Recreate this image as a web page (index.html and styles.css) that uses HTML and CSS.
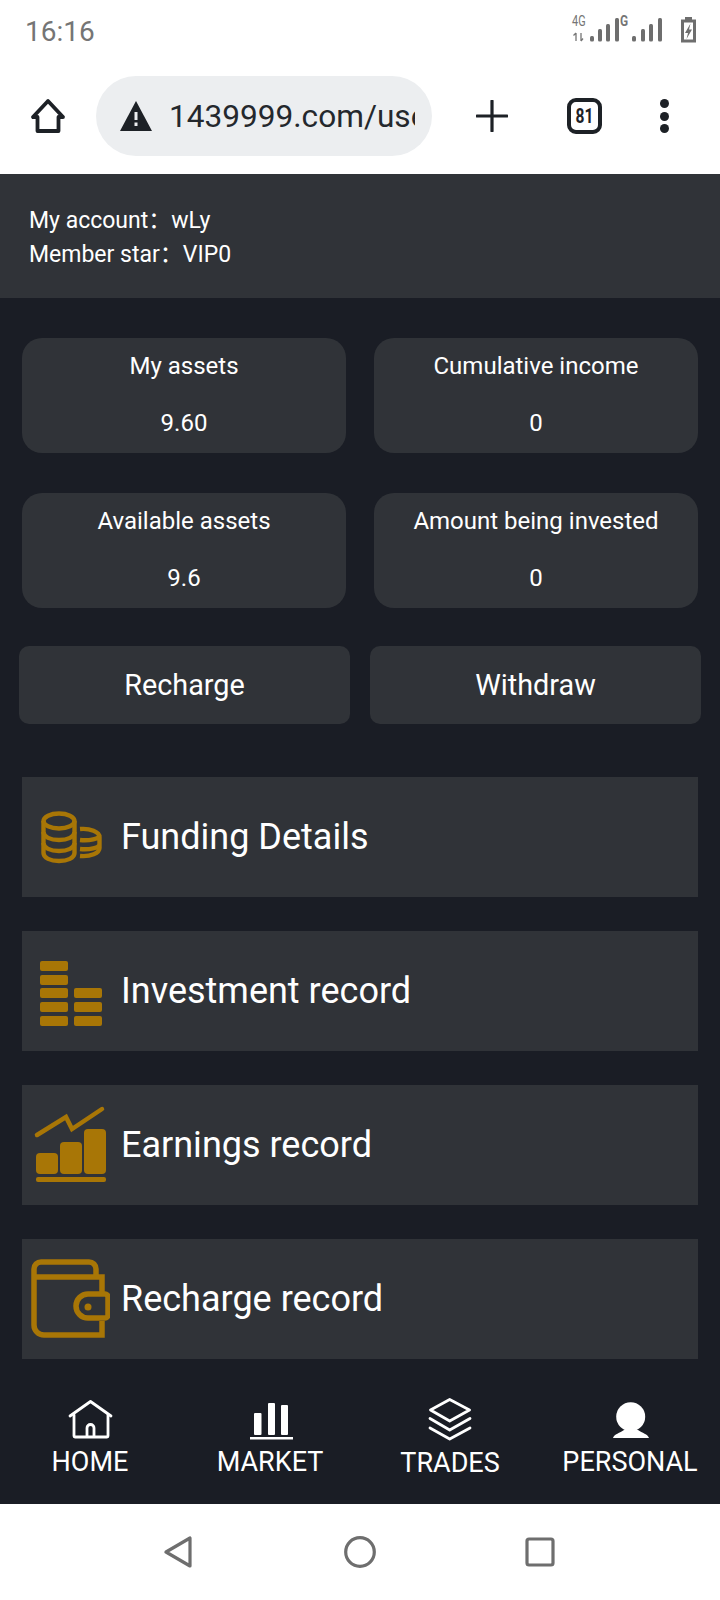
FILE: index.html
```
<!DOCTYPE html>
<html>

<head>
  <title>Personal</title>
  <meta charset="UTF-8">
  <link rel="stylesheet" href="styles.css">
</head>

<body>
  <div class="status-bar">
    <span class="clock">16:16</span>
    <svg class="status-icons" width="130" height="30" viewBox="0 0 130 30">
      <text class="net-label" transform="translate(4,11) scale(0.78,1)">4G</text>
      <path d="M8 18v8M5.500 20.500L8 18M13 18v8M13 26l2-2.500" stroke="#757575" stroke-width="1.300" fill="none" />
      <g fill="#6e6e6e">
        <rect x="22" y="21" width="4" height="5.500" rx="1.500" />
        <rect x="30" y="14" width="4" height="12.500" rx="1.500" />
        <rect x="38" y="9" width="4" height="17.500" rx="1.500" />
        <rect x="47" y="3" width="4" height="23.500" rx="1.500" />
        <rect x="64" y="21" width="4" height="5.500" rx="1.500" />
        <rect x="73" y="14" width="4" height="12.500" rx="1.500" />
        <rect x="81" y="9" width="4" height="17.500" rx="1.500" />
        <rect x="90" y="3" width="4" height="23.500" rx="1.500" />
      </g>
      <text class="net-label bold" transform="translate(52,11) scale(0.85,1)">G</text>
      <rect x="114.500" y="6" width="12" height="20" fill="none" stroke="#6e6e6e" stroke-width="3" />
      <rect x="117" y="2" width="7" height="4" fill="#6e6e6e" />
      <path d="M122.500 8.500l-5.500 9.500h3l-1.500 6 5.500-9.500h-3z" fill="#6e6e6e" />
    </svg>
  </div>

  <div class="toolbar">
    <svg class="tool-home" width="36" height="36" viewBox="0 0 36 36">
      <path d="M18 3L3 19h4.500v14h21V19H33z" fill="none" stroke="#1d2126" stroke-width="3.800" stroke-linejoin="round" />
    </svg>
    <div class="url-pill">
      <svg width="32" height="30" viewBox="0 0 32 30">
        <path d="M16 0L32 30H0z" fill="#1d2126" />
        <rect x="14.500" y="11" width="3" height="8" fill="#eceef0" />
        <rect x="14.500" y="21.500" width="3" height="3.500" fill="#eceef0" />
      </svg>
      <span class="url-text">1439999.com/user/index</span>
    </div>
    <svg class="tool-plus" width="32" height="32" viewBox="0 0 32 32">
      <path d="M16 1v30M1 16h30" stroke="#1d2126" stroke-width="3.200" stroke-linecap="round" />
    </svg>
    <div class="tab-count"><span>81</span></div>
    <div class="tool-menu"><i></i><i></i><i></i></div>
  </div>

  <div class="page">
    <div class="account">
      <div>My account：wLy</div>
      <div>Member star：VIP0</div>
    </div>

    <div class="stats">
      <div class="stat">
        <div>My assets</div>
        <div>9.60</div>
      </div>
      <div class="stat">
        <div>Cumulative income</div>
        <div>0</div>
      </div>
      <div class="stat">
        <div>Available assets</div>
        <div>9.6</div>
      </div>
      <div class="stat">
        <div>Amount being invested</div>
        <div>0</div>
      </div>
    </div>

    <div class="actions">
      <div class="action">Recharge</div>
      <div class="action">Withdraw</div>
    </div>

    <div class="records">
      <div class="record">
        <svg width="80" height="80" viewBox="0 0 80 80" fill="none" stroke="#a87606" stroke-width="4.400">
          <ellipse cx="29" cy="24" rx="15.500" ry="7.500" />
          <path d="M13.500 24v32c0 5 7 8 15.500 8s15.500-3 15.500-8V24" />
          <path d="M13.500 35c0 5 7 8 15.500 8s15.500-3 15.500-8M13.500 46c0 5 7 8 15.500 8s15.500-3 15.500-8" />
          <path d="M50 32c10-1 19.500 3 19.500 8v11c0 5-9 9-19.500 8M50 43c9 1 19.500-1 19.500-5M50 52c9 1 19.500-1 19.500-5" />
        </svg>
        <span>Funding Details</span>
      </div>
      <div class="record">
        <svg width="80" height="80" viewBox="0 0 80 80" fill="#a87606">
          <rect x="10" y="10" width="28" height="10" rx="2" />
          <rect x="10" y="24" width="28" height="10" rx="2" />
          <rect x="10" y="37" width="28" height="10" rx="2" />
          <rect x="10" y="51" width="28" height="10" rx="2" />
          <rect x="10" y="65" width="28" height="10" rx="2" />
          <rect x="44" y="37" width="28" height="10" rx="2" />
          <rect x="44" y="51" width="28" height="10" rx="2" />
          <rect x="44" y="65" width="28" height="10" rx="2" />
        </svg>
        <span>Investment record</span>
      </div>
      <div class="record">
        <svg width="80" height="80" viewBox="0 0 80 80" fill="#a87606">
          <path d="M7 30L36 12l6 12L72 4" fill="none" stroke="#a87606" stroke-width="4.500" stroke-linecap="round" />
          <rect x="6" y="48" width="22" height="21" rx="4" />
          <rect x="30" y="37" width="22" height="32" rx="4" />
          <rect x="54" y="24" width="22" height="45" rx="4" />
          <rect x="6" y="72" width="70" height="5" rx="2" />
        </svg>
        <span>Earnings record</span>
      </div>
      <div class="record">
        <svg width="80" height="80" viewBox="0 0 80 80" fill="none" stroke="#a87606" stroke-width="5.500">
          <path d="M4 18v48a10 10 0 0 0 10 10h58V62M72 33V18H4V10a7 7 0 0 1 7-7h48a7 7 0 0 1 7 7v8" />
          <path d="M75 35H58a12 12 0 0 0 0 24h17a3 3 0 0 0 3-3V38a3 3 0 0 0-3-3z" />
          <circle cx="58" cy="48" r="3.500" fill="#a87606" stroke="none" />
        </svg>
        <span>Recharge record</span>
      </div>
    </div>

    <div class="tabbar">
      <div class="tab">
        <svg width="48" height="44" viewBox="0 0 48 44" fill="none" stroke="#fff" stroke-width="2.800" stroke-linejoin="round" stroke-linecap="round">
          <path d="M4 18L24.500 3.500 45 18" />
          <path d="M8 17v21a1 1 0 0 0 1 1h32a1 1 0 0 0 1-1V17" />
          <path d="M21 38V30a3.500 3.500 0 0 1 7 0v8" />
        </svg>
        <span>HOME</span>
      </div>
      <div class="tab">
        <svg width="48" height="44" viewBox="0 0 48 44" fill="#fff">
          <rect x="8" y="15" width="7.500" height="22" rx="1" />
          <rect x="22" y="5" width="7" height="32" rx="1" />
          <rect x="35" y="7" width="7" height="30" rx="1" />
          <rect x="4" y="39" width="43" height="2.500" />
        </svg>
        <span>MARKET</span>
      </div>
      <div class="tab tab-low">
        <svg width="52" height="44" viewBox="0 0 52 44" fill="none" stroke="#fff" stroke-width="2.800" stroke-linejoin="round" stroke-linecap="round">
          <path d="M25.700 1.500L45.500 12 25.700 23 6.500 12z" />
          <path d="M6 20.500L25.700 32 46 20.500" />
          <path d="M6 30L25.700 41 46 30" />
        </svg>
        <span>TRADES</span>
      </div>
      <div class="tab">
        <svg width="48" height="44" viewBox="0 0 48 44" fill="#fff">
          <circle cx="24.700" cy="18.700" r="14.500" />
          <path d="M7 40c1-4 7-5 11-8h14c4 3 10 4 11 8z" />
        </svg>
        <span>PERSONAL</span>
      </div>
    </div>
  </div>

  <div class="system-nav">
    <svg width="30" height="32" viewBox="0 0 30 32" fill="none" stroke="#6e6e6e" stroke-width="3.200" stroke-linejoin="round">
      <path d="M2 16L26 2v28z" />
    </svg>
    <svg width="32" height="32" viewBox="0 0 32 32" fill="none" stroke="#6e6e6e" stroke-width="3.200">
      <circle cx="16" cy="16" r="14.300" />
    </svg>
    <svg width="30" height="30" viewBox="0 0 30 30" fill="none" stroke="#6e6e6e" stroke-width="3.200" stroke-linejoin="round">
      <rect x="2" y="2" width="26" height="26" rx="2" />
    </svg>
  </div>
</body>

</html>
```

FILE: styles.css
```
* {
  box-sizing: border-box;
  font-family: Roboto, "Noto Sans CJK SC", sans-serif;
}

body {
  margin: 0;
  width: 720px;
  height: 1600px;
  background-color: #fff;
  overflow: hidden;
}

.status-bar {
  height: 60px;
  display: flex;
  align-items: center;
  justify-content: space-between;
  padding: 2px 22px 0 25px;
}

.clock {
  font-size: 28px;
  color: #757575;
}

.status-icons {
  display: block;
  margin-top: -2px;
  overflow: visible;
}

.net-label {
  font-size: 14px;
  fill: #757575;
}

.net-label.bold {
  font-weight: 700;
}

.toolbar {
  height: 114px;
  display: flex;
  align-items: center;
  padding-bottom: 2px;
}

.tool-home {
  margin-left: 30px;
  flex: none;
}

.url-pill {
  width: 336px;
  height: 80px;
  margin-left: 30px;
  padding: 0 17px 0 24px;
  display: flex;
  align-items: center;
  gap: 17px;
  flex: none;
  background-color: #eceef0;
  border-radius: 40px;
  overflow: hidden;
}

.url-pill svg {
  flex: none;
}

.url-text {
  font-size: 31.600px;
  color: #24282d;
  white-space: nowrap;
  overflow: hidden;
}

.tool-plus {
  margin-left: 44px;
  flex: none;
}

.tab-count {
  width: 35px;
  height: 36px;
  margin-left: 59px;
  flex: none;
  display: flex;
  align-items: center;
  justify-content: center;
  border: 4px solid #1d2126;
  border-radius: 9px;
  font-size: 20px;
  font-weight: 700;
  color: #1d2126;
}

.tab-count span {
  display: inline-block;
  transform: scaleX(0.78);
}

.tool-menu {
  margin-left: 58px;
  display: flex;
  flex-direction: column;
  gap: 3.500px;
}

.tool-menu i {
  width: 9px;
  height: 9px;
  border-radius: 50%;
  background-color: #1d2126;
}

.page {
  height: 1330px;
  background-color: #1a1d25;
  color: #fff;
  display: flex;
  flex-direction: column;
}

.account {
  height: 124px;
  padding: 30px 29px 0;
  background-color: #303338;
  font-size: 23px;
  line-height: 34px;
}

.stats {
  display: grid;
  grid-template-columns: 324px 324px;
  grid-auto-rows: 115px;
  gap: 40px 28px;
  padding: 40px 22px 0;
}

.stat {
  padding-top: 11px;
  background-color: #303338;
  border-radius: 20px;
  font-size: 24px;
  line-height: 34px;
  text-align: center;
}

.stat div + div {
  margin-top: 23px;
}

.actions {
  display: flex;
  gap: 20px;
  padding: 38px 19px 0;
}

.action {
  width: 331px;
  height: 78px;
  padding-bottom: 1px;
  display: flex;
  align-items: center;
  justify-content: center;
  background-color: #303338;
  border-radius: 10px;
  font-size: 28.800px;
}

.records {
  display: flex;
  flex-direction: column;
  gap: 34px;
  padding: 53px 22px 0;
}

.record {
  height: 120px;
  padding-left: 8px;
  display: flex;
  align-items: center;
  gap: 11px;
  background-color: #303338;
  font-size: 36px;
}

.record svg {
  flex: none;
}

.tabbar {
  display: grid;
  grid-template-columns: repeat(4, 180px);
  padding-top: 39px;
}

.tab {
  display: flex;
  flex-direction: column;
  align-items: center;
  font-size: 27px;
  line-height: 34px;
}

.tab svg {
  display: block;
}

.tab span {
  margin-top: 3px;
}

.tab-low span {
  margin-top: 4px;
}

.system-nav {
  height: 96px;
  display: flex;
  align-items: center;
  justify-content: space-between;
  padding: 0 165px 0 164px;
}
```
